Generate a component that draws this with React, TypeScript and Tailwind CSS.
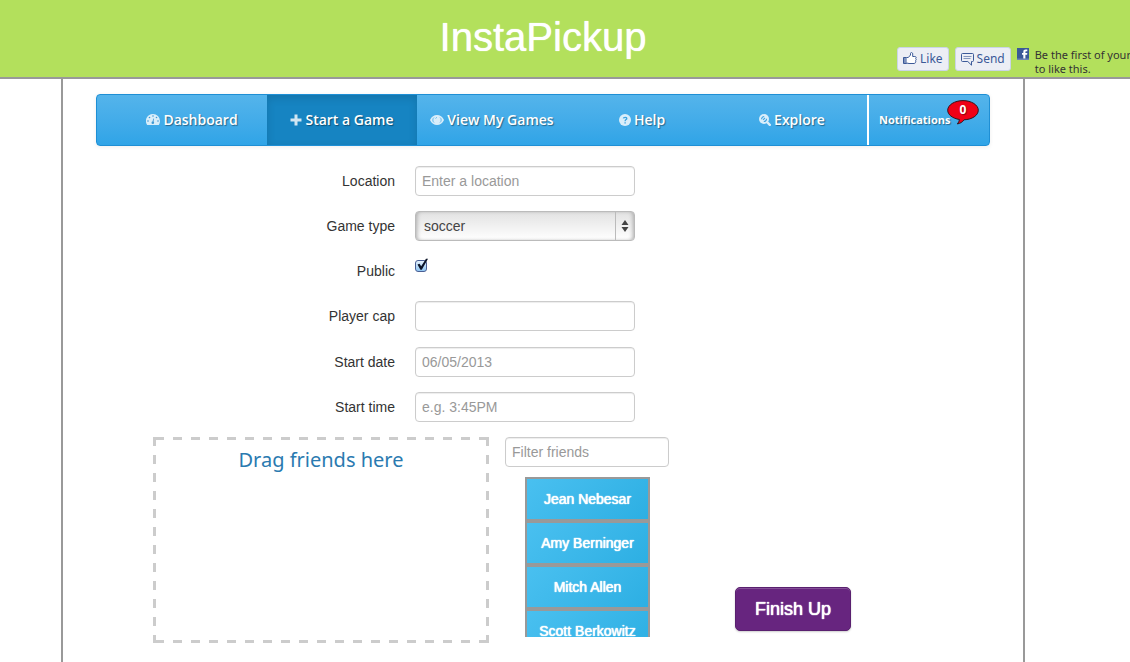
import React, { useState } from "react";

const navItem =
  "flex h-full w-[150px] items-center justify-center gap-[3px] [text-shadow:1px_1px_1px_rgba(0,0,0,0.4)]";
const field =
  "block h-[30px] rounded-[4px] border border-[#ccc] bg-white px-1.5 text-sm text-[#555] shadow-[inset_0_1px_1px_rgba(0,0,0,0.075)] outline-none placeholder:text-[#999]";
const dashes =
  "bg-[image:repeating-linear-gradient(90deg,#ccc_0_9px,transparent_9px_18px),repeating-linear-gradient(90deg,#ccc_0_9px,transparent_9px_18px),repeating-linear-gradient(180deg,#ccc_0_9px,transparent_9px_18px),repeating-linear-gradient(180deg,#ccc_0_9px,transparent_9px_18px)] [background-size:18px_3px,18px_3px,3px_18px,3px_18px] [background-position:2px_0,2px_100%,0_0,100%_0] [background-repeat:repeat-x,repeat-x,repeat-y,repeat-y]";
const fbButton =
  "flex h-6 items-center gap-[3px] rounded-[3px] border border-[#cad4e7] bg-[#eceef5] px-[5px] text-xs text-[#3b5998]";

function ThumbIcon() {
  return (
    <svg width="14" height="14" viewBox="0 0 14 14" fill="none" stroke="#3b5998" aria-hidden="true">
      <path d="M0.5 5.5h3v6h-3z" fill="#7f93bd" />
      <path d="M3.5 5.5h1.800l2.200-2.500V1.400c0-1.200 2.200-1.200 2.200.4v2.700h2.100c1.600 0 1.700 1.500.9 2 .8.6.6 1.600-.1 1.900.5.6.3 1.500-.4 1.700.4.7 0 1.400-.8 1.400H6l-2.500-.5" fill="#fff" />
    </svg>
  );
}

function SendIcon() {
  return (
    <svg width="13" height="13" viewBox="0 0 13 13" fill="none" stroke="#3b5998" aria-hidden="true">
      <path d="M1.5.5h10a1 1 0 0 1 1 1v6a1 1 0 0 1-1 1h-1v3.700L6.800 8.500H1.500a1 1 0 0 1-1-1v-6a1 1 0 0 1 1-1z" fill="#eceef5" />
      <path d="M2.500 3.500h8M2.500 5.500h7" stroke="#8496bd" />
    </svg>
  );
}

function FacebookIcon() {
  return (
    <svg className="shrink-0" width="12" height="12" viewBox="0 0 12 12" aria-hidden="true">
      <path d="M0 0h12v12H0z" fill="#3b5998" />
      <path d="M0 10.500h12V12H0z" fill="#6d84b4" />
      <path d="M6.300 10.500V6.800H5V5h1.300V3.900C6.300 2.300 7.200 1.500 8.700 1.500h1.600v1.800H9.200c-.6 0-.8.3-.8.8V5h1.900l-.2 1.800H8.400v3.700z" fill="#fff" />
    </svg>
  );
}

function DashboardIcon() {
  return (
    <svg className="opacity-80" width="14" height="12" viewBox="0 0 14 12" aria-hidden="true">
      <path d="M7 0a7 7 0 0 1 7 7c0 1.400-.4 2.600-1 3.700-.2.200-.4.300-.6.300H1.600c-.2 0-.4-.1-.6-.3A7 7 0 0 1 7 0z" fill="#fff" />
      <g fill="#3f95cf">
        <circle cx="7" cy="2" r=".8" />
        <circle cx="3.500" cy="3.500" r=".8" />
        <circle cx="10.500" cy="3.500" r=".8" />
        <circle cx="2" cy="7" r=".8" />
        <circle cx="12" cy="7" r=".8" />
        <circle cx="6.800" cy="8.700" r="1.300" />
        <path d="M6.400 8.500l.8-4 .7.200-.5 4z" />
      </g>
    </svg>
  );
}

function PlusIcon() {
  return (
    <svg className="opacity-80" width="12" height="12" viewBox="0 0 12 12" fill="#fff" aria-hidden="true">
      <path d="M4.500.5h3v4h4v3h-4v4h-3v-4h-4v-3h4z" />
    </svg>
  );
}

function EyeIcon() {
  return (
    <svg className="opacity-80" width="14" height="10" viewBox="0 0 14 10" aria-hidden="true">
      <path d="M0 5C1.500 1.700 4 0 7 0s5.500 1.700 7 5c-1.500 3.300-4 5-7 5S1.500 8.300 0 5z" fill="#fff" />
      <path d="M4 2.500a4 3.500 0 0 0 0 5M10 2.500a4 3.500 0 0 1 0 5M5.500 3.500A2 2 0 0 1 7 2.500" fill="none" stroke="#5db4e8" strokeWidth=".9" />
    </svg>
  );
}

function HelpIcon() {
  return (
    <svg className="opacity-80" width="12" height="12" viewBox="0 0 12 12" fill="none" aria-hidden="true">
      <circle cx="6" cy="6" r="6" fill="#fff" />
      <path d="M4.300 4.300C4.500 3 7.900 2.800 7.800 4.600 7.700 5.600 6.100 5.700 6.100 7.200" stroke="#3da2df" strokeWidth="1.300" />
      <path d="M5.400 8.200h1.400v1.300H5.400z" fill="#3da2df" />
    </svg>
  );
}

function ExploreIcon() {
  return (
    <svg className="opacity-80" width="12" height="12" viewBox="0 0 12 12" fill="none" aria-hidden="true">
      <circle cx="5" cy="5" r="5" fill="#fff" />
      <path d="M8.500 8.500l2.300 2.300" stroke="#fff" strokeWidth="2.400" strokeLinecap="round" />
      <path d="M2.600 5.200A2.600 2.600 0 0 1 5.200 2.500M7.500 4.800A2.600 2.600 0 0 1 4.800 7.500M4 5.800l2-1.800" stroke="#3da2df" strokeWidth="1.100" />
    </svg>
  );
}

function Row({ label, id, children }: { label: string; id: string; children: React.ReactNode }) {
  return (
    <div className="flex gap-5">
      <label htmlFor={id} className="w-[299px] pt-[5px] text-right text-sm leading-5">
        {label}
      </label>
      {children}
    </div>
  );
}

const friends = ["Jean Nebesar", "Amy Berninger", "Mitch Allen", "Scott Berkowitz"];

export default function App() {
  const [checked, setChecked] = useState(true);
  return (
    <div className="flex min-h-screen flex-col overflow-x-hidden bg-white font-['Liberation_Sans',Arial,sans-serif] text-[#333]">
      <header className="relative border-b-2 border-[#999] bg-[#b3e05c] pr-11">
        <h1 className="pt-[17px] pb-5 text-center text-[40px] leading-10 text-white [text-shadow:0_0_1px_#fff]">
          InstaPickup
        </h1>
        <div className="absolute top-[47px] right-0 flex w-[233px] items-start font-['Noto_Sans','Open_Sans',sans-serif] whitespace-nowrap">
          <button type="button" className={fbButton}>
            <ThumbIcon />
            Like
          </button>
          <button type="button" className={`${fbButton} ml-1.5`}>
            <SendIcon />
            Send
          </button>
          <div className="ml-1.5 flex gap-1.5 pt-px">
            <FacebookIcon />
            <p className="text-[11px] leading-[14px]">
              Be the first of your
              <br />
              to like this.
            </p>
          </div>
        </div>
      </header>

      <div className="flex grow pr-11">
        <main className="mx-auto w-full max-w-[964px] border-x-2 border-[#999] px-[33px] pt-[15px]">
          <nav className="flex h-[52px] items-center rounded-[4px] border border-[#1e8fd5] bg-linear-to-b from-[#54b4eb] to-[#2fa4e7] pl-5 font-['Open_Sans','Noto_Sans',sans-serif] text-sm font-semibold text-white shadow-[0_1px_4px_rgba(0,0,0,0.07)]">
            <a href="#dashboard" className={navItem}>
              <DashboardIcon />
              Dashboard
            </a>
            <a href="#start" className={`${navItem} bg-[#1684c2] shadow-[inset_0_3px_8px_rgba(0,0,0,0.125)]`}>
              <PlusIcon />
              Start a Game
            </a>
            <a href="#games" className={navItem}>
              <EyeIcon />
              View My Games
            </a>
            <a href="#help" className={navItem}>
              <HelpIcon />
              Help
            </a>
            <a href="#explore" className={navItem}>
              <ExploreIcon />
              Explore
            </a>
            <a
              href="#notifications"
              className="relative flex h-full grow items-center border-l-2 border-white pl-2.5 text-[11px] font-bold [text-shadow:1px_1px_1px_rgba(0,0,0,0.4)]"
            >
              Notifications
              <span className="absolute top-[5px] right-2.5 flex h-[25px] w-8 justify-center text-xs leading-[19px]">
                <svg className="absolute inset-0" width="32" height="25" viewBox="0 0 32 25" aria-hidden="true">
                  <path d="M16 .6C7.600.6.700 5 .700 10.200c0 4.500 4.800 8.200 11.800 9.300-.3 1.800-1 3.200-2.200 4.400 3-.4 5.300-1.900 6.700-4.100 8-.2 14.300-4.400 14.300-9.600C31.300 5 24.400.6 16 .6z" fill="#ef0016" stroke="#33151d" />
                </svg>
                <span className="relative">0</span>
              </span>
            </a>
          </nav>

          <form className="pt-5" onSubmit={(e) => e.preventDefault()}>
            <div className="flex flex-col gap-4">
              <div className="flex flex-col gap-[15px]">
                <Row label="Location" id="location">
                  <input id="location" placeholder="Enter a location" className={`${field} w-[220px]`} />
                </Row>
                <Row label="Game type" id="type">
                  <div className="relative w-[220px]">
                    <select
                      id="type"
                      className="block h-[30px] w-full appearance-none rounded-[4px] border border-[#bbb] bg-linear-to-b from-[#e2e2e2] to-white px-2 text-sm text-[#444] shadow-[inset_3px_0_4px_-2px_#aaa,inset_-3px_0_4px_-2px_#aaa] outline-none"
                    >
                      <option>soccer</option>
                    </select>
                    <span className="pointer-events-none absolute inset-y-px right-0 flex w-5 items-center border-l border-[#bbb] pl-[5px]">
                      <svg width="8" height="12" viewBox="0 0 8 12" fill="#444" aria-hidden="true">
                        <path d="M4 0L7.500 5H.500zM4 12L.500 7h7z" />
                      </svg>
                    </span>
                  </div>
                </Row>
                <Row label="Public" id="public">
                  <div className="relative h-[30px]">
                    <input
                      id="public"
                      type="checkbox"
                      checked={checked}
                      onChange={(e) => setChecked(e.target.checked)}
                      className="mt-1 block size-3 appearance-none rounded-[3px] border border-[#4a5f94] bg-linear-to-b from-[#e4f1fc] to-[#8fc5f2]"
                    />
                    {checked && (
                      <svg className="pointer-events-none absolute top-0.5 left-0" width="14" height="14" viewBox="0 0 14 14" aria-hidden="true">
                        <path d="M2.500 6.500l2-.8 1.700 2.500L11 .800h2L6.800 11.800H5.400z" fill="#0a1226" />
                      </svg>
                    )}
                  </div>
                </Row>
                <Row label="Player cap" id="cap">
                  <input id="cap" className={`${field} w-[220px]`} />
                </Row>
              </div>
              <div className="flex flex-col gap-[15px]">
                <Row label="Start date" id="date">
                  <input id="date" placeholder="06/05/2013" className={`${field} w-[220px]`} />
                </Row>
                <Row label="Start time" id="time">
                  <input id="time" placeholder="e.g. 3:45PM" className={`${field} w-[220px]`} />
                </Row>
              </div>
            </div>

            <div className="mt-[15px] flex items-start pl-[57px]">
              <section className={`h-[206px] w-[336px] pt-2 ${dashes}`}>
                <h2 className="text-center font-['Noto_Sans','Open_Sans',sans-serif] text-xl leading-[30px] text-[#2a7ab0]">
                  Drag friends here
                </h2>
              </section>
              <div className="ml-4 w-[164px]">
                <input aria-label="Filter friends" placeholder="Filter friends" className={`${field} w-full`} />
                <ul className="mx-5 mt-2.5 h-40 w-[125px] overflow-hidden">
                  {friends.map((name) => (
                    <li
                      key={name}
                      className="flex h-11 items-center justify-center border-2 border-[#999] bg-linear-135 from-[#49c0f0] to-[#2cafe3] text-sm whitespace-nowrap text-white [text-shadow:0_0_1px_#fff,0_0_1px_#fff]"
                    >
                      {name}
                    </li>
                  ))}
                </ul>
              </div>
              <button
                type="submit"
                className="mt-[150px] ml-[66px] h-11 w-[116px] rounded-[5px] border border-[#59206f] bg-[#67257f] text-lg text-white shadow-[inset_0_1px_0_rgba(255,255,255,0.2),0_1px_2px_rgba(0,0,0,0.2)] [text-shadow:0_0_1px_#fff,0_0_1px_#fff]"
              >
                Finish Up
              </button>
            </div>
          </form>
        </main>
      </div>
    </div>
  );
}
